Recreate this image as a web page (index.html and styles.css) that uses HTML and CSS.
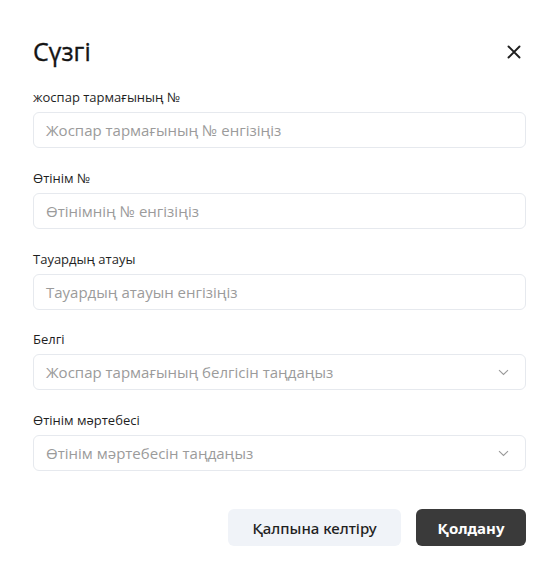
FILE: index.html
```html
<!DOCTYPE html>
<html lang="kk">
<head>
<meta charset="utf-8">
<link rel="stylesheet" href="styles.css">
</head>
<body>
<div class="dialog">
  <div class="header">
    <h1 class="title">Сүзгі</h1>
    <button class="close" aria-label="close">
      <svg width="14" height="14" viewBox="0 0 14 14"><path d="M1.5 1.5L12.5 12.5M12.5 1.5L1.5 12.5" stroke="#1f1f1f" stroke-width="1.9" stroke-linecap="round"/></svg>
    </button>
  </div>
  <div class="fields">
    <div class="field">
      <label class="label">жоспар тармағының №</label>
      <div class="input"><span class="ph">Жоспар тармағының № енгізіңіз</span></div>
    </div>
    <div class="field">
      <label class="label">Өтінім №</label>
      <div class="input"><span class="ph">Өтінімнің № енгізіңіз</span></div>
    </div>
    <div class="field">
      <label class="label">Тауардың атауы</label>
      <div class="input"><span class="ph">Тауардың атауын енгізіңіз</span></div>
    </div>
    <div class="field">
      <label class="label">Белгі</label>
      <div class="input select"><span class="ph">Жоспар тармағының белгісін таңдаңыз</span>
        <svg class="chev" width="11" height="7" viewBox="0 0 11 7"><path d="M1 1.2L5.5 5.5L10 1.2" fill="none" stroke="#9a9a9a" stroke-width="1.1"/></svg>
      </div>
    </div>
    <div class="field">
      <label class="label">Өтінім мәртебесі</label>
      <div class="input select"><span class="ph">Өтінім мәртебесін таңдаңыз</span>
        <svg class="chev" width="11" height="7" viewBox="0 0 11 7"><path d="M1 1.2L5.5 5.5L10 1.2" fill="none" stroke="#9a9a9a" stroke-width="1.1"/></svg>
      </div>
    </div>
  </div>
  <div class="actions">
    <button class="btn btn-reset">Қалпына келтіру</button>
    <button class="btn btn-apply">Қолдану</button>
  </div>
</div>
</body>
</html>
```

FILE: styles.css
```css
* { box-sizing: border-box; }
html, body { margin: 0; padding: 0; background: #fff; }
body { font-family: "Open Sans", "Noto Sans", sans-serif; color: #1f1f1f; }
.dialog {
  width: 552px;
  padding: 34px 26px 0 33px;
}
.header {
  display: flex;
  align-items: center;
  justify-content: space-between;
  height: 34px;
}
.title {
  margin: 0;
  font-family: "Open Sans", "Noto Sans", sans-serif;
  font-size: 25px;
  font-weight: 500;
  line-height: 34px;
  color: #141414;
  -webkit-text-stroke: 0.35px #141414;
  letter-spacing: 0.1px;
}
.close {
  border: 0;
  background: none;
  padding: 0;
  width: 14px;
  height: 14px;
  margin-right: 5px;
  margin-top: 1px;
  display: flex;
}
.fields {
  display: flex;
  flex-direction: column;
  gap: 20.75px;
  margin-top: 20px;
}
.field {
  display: flex;
  flex-direction: column;
  gap: 6px;
}
.label {
  font-size: 13px;
  line-height: 18px;
  color: #1f1f1f;
}
.input {
  height: 36px;
  border: 1px solid #e6e9ee;
  border-radius: 6px;
  display: flex;
  align-items: center;
  padding: 0 12px;
}
.ph {
  font-size: 15px;
  color: #9b9b9b;
  flex: 1;
  white-space: nowrap;
}
.select .chev { margin-right: 4px; }
.actions {
  display: flex;
  justify-content: flex-end;
  gap: 15px;
  margin-top: 38px;
}
.btn {
  height: 37px;
  border: 0;
  border-radius: 6px;
  font-family: "Noto Sans", "Open Sans", sans-serif;
  font-size: 15px;
  padding: 0;
}
.btn-reset {
  width: 173px;
  background: #f0f3f8;
  color: #1f1f1f;
  font-weight: 500;
}
.btn-apply {
  width: 110px;
  background: #3a3a3a;
  color: #fff;
  font-weight: 700;
}
```
